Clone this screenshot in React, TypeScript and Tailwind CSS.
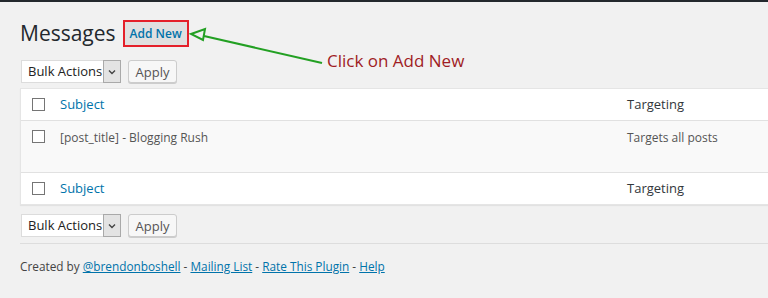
import React from "react";

const font = { fontFamily: '"Open Sans", "Noto Sans", sans-serif' };

function Checkbox() {
  return <span className="inline-block w-[13px] h-[13px] border border-[#757575] bg-white shrink-0" />;
}

function BulkBar() {
  return (
    <div className="flex items-center gap-[7px] h-[23px]">
      <div className="flex h-[23px] w-[100px] border border-[#dcdcdc] border-r-0 bg-white">
        <span className="flex-1 min-w-0 pl-[6px] whitespace-nowrap overflow-hidden text-[13px] leading-[21px] text-[#222]">Bulk Actions</span>
        <span className="shrink-0 w-[18px] h-[23px] -mt-px border border-[#a9a9a9] bg-[#e3e3e3] flex items-center justify-center">
          <svg width="8" height="6" viewBox="0 0 8 6">
            <path d="M1 1.5 L4 4.5 L7 1.5" fill="none" stroke="#444" strokeWidth="1.4" />
          </svg>
        </span>
      </div>
      <button className="h-[23px] w-[49px] rounded-[3px] border border-[#cccccc] bg-[#f7f7f7] shadow-[0_1px_0_#cccccc] text-[13px] leading-[20px] text-[#555]">
        Apply
      </button>
    </div>
  );
}

function Row({ head, children, targeting, tall }: { head?: boolean; children: React.ReactNode; targeting: string; tall?: boolean }) {
  return (
    <div className={tall ? "flex items-start h-[51px] pt-[9px] bg-[#f9f9f9]" : "flex items-center h-[31px] bg-white"}>
      <div className="w-[39px] pl-[11px] flex">
        <Checkbox />
      </div>
      <div className={`flex-1 leading-[15px] ${head ? "text-[13px] text-[#0073aa]" : "text-[12px] text-[#555]"}`}>{children}</div>
      <div className={`w-[172px] leading-[15px] ${head ? "text-[13px] text-[#32373c]" : "text-[12px] text-[#555]"}`}>{targeting}</div>
    </div>
  );
}

export default function App() {
  return (
    <div style={font} className="relative w-[768px] h-[298px] overflow-hidden bg-[#f1f1f1]">
      <div className="h-[2px] bg-[#23282d]" />
      <div className="pl-[20px]">
        <div className="flex items-center h-[37px] mt-[13px]">
          <h1 className="text-[21px] leading-[29px] text-[#23282d] font-normal">Messages</h1>
          <div className="ml-[7px] border-2 border-[#e4202a] h-[27px] flex items-center">
            <span className="h-[23px] px-[5px] bg-[#e0e0e0] text-[12px] leading-[23px] font-semibold text-[#0073aa]">Add New</span>
          </div>
        </div>
        <div className="mt-[8px] pl-[1px]">
          <BulkBar />
        </div>
        <div className="mt-[5px] w-[780px] border border-[#e5e5e5] shadow-[0_1px_1px_rgba(0,0,0,0.06)] bg-white">
          <div className="border-b border-[#e1e1e1]">
            <Row head targeting="Targeting">Subject</Row>
          </div>
          <div className="border-b border-[#e1e1e1]">
            <Row tall targeting="Targets all posts">[post_title] - Blogging Rush</Row>
          </div>
          <Row head targeting="Targeting">Subject</Row>
        </div>
        <div className="mt-[9px] pl-[1px]">
          <BulkBar />
        </div>
        <div className="mt-[6px] border-t border-[#dddddd]" />
        <p className="mt-[14px] text-[11.8px] text-[#444]">
          Created by <a className="underline text-[#0073aa]">@brendonboshell</a> -{" "}
          <a className="underline text-[#0073aa]">Mailing List</a> -{" "}
          <a className="underline text-[#0073aa]">Rate This Plugin</a> -{" "}
          <a className="underline text-[#0073aa]">Help</a>
        </p>
      </div>

      <svg className="absolute left-0 top-0 pointer-events-none" width="768" height="298">
        <line x1="204" y1="36" x2="322" y2="63" stroke="#23a023" strokeWidth="2" />
        <polygon points="191,34 205,29 203,40" fill="none" stroke="#23a023" strokeWidth="2" strokeLinejoin="miter" />
      </svg>
      <span className="absolute left-[327px] top-[49px] text-[17px] leading-[24px] text-[#a01c24]">Click on Add New</span>
    </div>
  );
}
